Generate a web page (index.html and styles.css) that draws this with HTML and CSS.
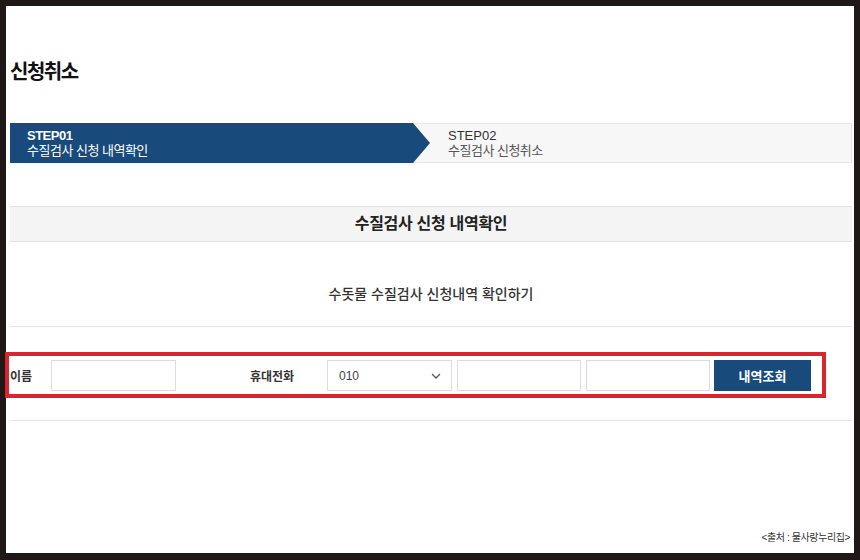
FILE: index.html
```html
<!DOCTYPE html>
<html lang="ko">
<head>
    <meta charset="UTF-8">
    <title>신청취소</title>
    <link rel="stylesheet" href="styles.css">
</head>
<body>
    <div class="frame">
        <h2 class="page-title">신청취소</h2>

        <div class="steps">
            <div class="step step-on">
                <strong>STEP01</strong>
                <span>수질검사 신청 내역확인</span>
            </div>
            <div class="step">
                <strong>STEP02</strong>
                <span>수질검사 신청취소</span>
            </div>
        </div>

        <div class="section-head">수질검사 신청 내역확인</div>
        <div class="section-desc">수돗물 수질검사 신청내역 확인하기</div>

        <div class="search-row">
            <label class="lbl lbl-name">이름</label>
            <input type="text" class="field field-name">
            <label class="lbl lbl-phone">휴대전화</label>
            <div class="select-wrap">
                <select class="field">
                    <option>010</option>
                    <option>011</option>
                    <option>016</option>
                </select>
                <svg class="chev" width="10" height="6" viewBox="0 0 10 6"><path d="M1 1l4 4 4-4" fill="none" stroke="#555" stroke-width="1.3"/></svg>
            </div>
            <input type="text" class="field">
            <input type="text" class="field">
            <button class="btn-search">내역조회</button>
        </div>
        <div class="row-line"></div>

        <div class="source">&lt;출처 : 물사랑누리집&gt;</div>

        <!-- highlight box over the search row -->
        <div class="highlight"></div>
    </div>
</body>
</html>
```

FILE: styles.css
```css
body {
    margin: 0;
    background-color: #201717;
    font-family: "Liberation Sans", "Noto Sans CJK KR", sans-serif;
    color: #222;
}

.frame {
    position: relative;
    margin: 6px 6px 0 6px;
    height: 547px;
    padding: 0 2px 0 4px;
    box-sizing: border-box;
    background-color: #fff;
    display: flex;
    flex-direction: column;
}

.page-title {
    margin: 54px 0 0 0;
    font-size: 20px;
    line-height: 24px;
    font-weight: 700;
    letter-spacing: -1.5px;
    color: #111;
}

.steps {
    display: flex;
    margin-top: 39px;
    height: 40px;
    background-color: #f7f7f7;
    border: 1px solid #e6e6e6;
    box-sizing: border-box;
}

.step {
    display: flex;
    flex-direction: column;
    justify-content: center;
    padding-left: 18px;
    font-size: 13px;
    line-height: 15px;
    color: #555;
}

.step span {
    letter-spacing: -0.5px;
}

.step strong {
    font-weight: 400;
    color: #333;
}

.step-on {
    width: 420px;
    margin: -1px 0 -1px -1px;
    padding-left: 17px;
    box-sizing: border-box;
    background-color: #184a7b;
    color: #fff;
    clip-path: polygon(0 0, calc(100% - 17px) 0, 100% 50%, calc(100% - 17px) 100%, 0 100%);
}

.step-on strong {
    font-weight: 700;
    color: #fff;
    letter-spacing: -0.5px;
}

.section-head {
    margin-top: 43px;
    height: 36px;
    line-height: 34px;
    box-sizing: border-box;
    text-align: center;
    font-size: 16px;
    font-weight: 700;
    letter-spacing: -0.3px;
    background-color: #f4f4f4;
    border-top: 1px solid #e2e2e2;
    border-bottom: 1px solid #e2e2e2;
    color: #222;
}

.section-desc {
    padding: 42px 0 22px;
    line-height: 20px;
    text-align: center;
    font-size: 14px;
    font-weight: 500;
    color: #333;
    border-bottom: 1px solid #e6e6e6;
}

.search-row {
    display: flex;
    align-items: center;
    margin-top: 33px;
    height: 31px;
}

.lbl {
    font-size: 12px;
    font-weight: 700;
    color: #333;
}

.lbl-name {
    width: 41px;
}

.lbl-phone {
    margin-left: 69px;
    width: 77px;
}

.field {
    width: 124px;
    height: 31px;
    box-sizing: border-box;
    border: 1px solid #dcdcdc;
    background: #fff;
    font-family: inherit;
    font-size: 12px;
    color: #444;
    padding: 0 11px;
    margin-right: 5px;
    outline: none;
}

.field-name {
    width: 125px;
}

.select-wrap {
    position: relative;
}

.select-wrap select {
    width: 125px;
    appearance: none;
    -webkit-appearance: none;
    display: block;
}

.chev {
    position: absolute;
    right: 16px;
    top: 13px;
}

.btn-search {
    width: 97px;
    height: 31px;
    margin-left: -1px;
    border: none;
    background-color: #184a7b;
    color: #fff;
    font-family: inherit;
    font-size: 13px;
    font-weight: 700;
    cursor: pointer;
}

.row-line {
    margin-top: 29px;
    border-bottom: 1px solid #e6e6e6;
}

.source {
    margin-top: auto;
    margin-bottom: 9px;
    text-align: right;
    padding-right: 2px;
    font-size: 10px;
    letter-spacing: -0.4px;
    color: #333;
}

.highlight {
    position: absolute;
    left: -1px;
    top: 346px;
    width: 821px;
    height: 46px;
    box-sizing: border-box;
    border: 4px solid #d7262e;
}
```
